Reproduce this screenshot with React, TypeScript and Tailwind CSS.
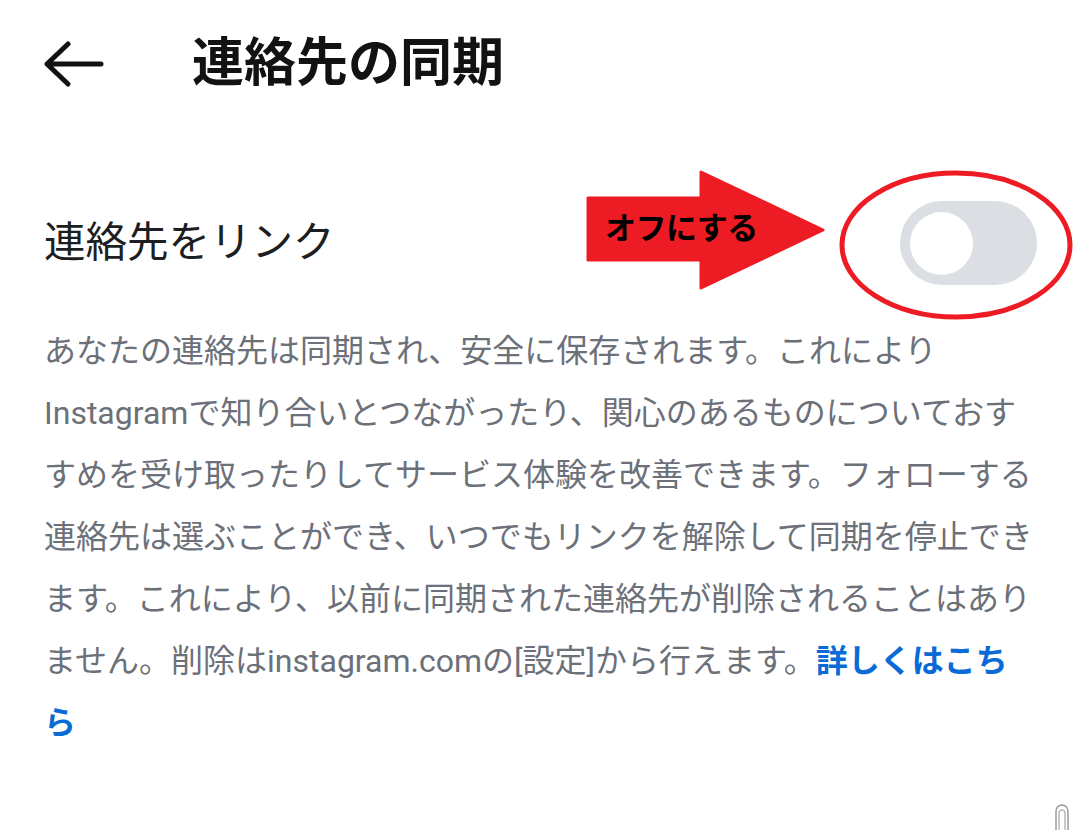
const lines = [
  "あなたの連絡先は同期され、安全に保存されます。これにより",
  "Instagramで知り合いとつながったり、関心のあるものについておす",
  "すめを受け取ったりしてサービス体験を改善できます。フォローする",
  "連絡先は選ぶことができ、いつでもリンクを解除して同期を停止でき",
  "ます。これにより、以前に同期された連絡先が削除されることはあり",
];

const BackArrow = () => (
  <svg width="60" height="46" viewBox="0 0 60 46" fill="none">
    <path
      d="M57 23H4M24 3L3 23L24 43"
      stroke="#111214"
      strokeWidth="5"
      strokeLinecap="round"
      strokeLinejoin="round"
    />
  </svg>
);

const Annotation = () => (
  <div className="absolute left-[586px] top-[170px] w-[490px] h-[152px] pointer-events-none">
    <svg width="490" height="152" viewBox="0 0 490 152" className="absolute inset-0">
      <path
        d="M2 28H115V2L237 60L115 118V90H2Z"
        fill="#ed1c24"
        strokeLinejoin="round"
        stroke="#ed1c24"
        strokeWidth="3"
      />
      <ellipse cx="370" cy="75" rx="114" ry="72" fill="none" stroke="#ed1c24" strokeWidth="5" />
    </svg>
    <span className="absolute left-[19px] top-[40px] text-[31px] leading-[38px] font-bold text-black tracking-[-0.5px]">
      オフにする
    </span>
  </div>
);

export default function App() {
  return (
    <div
      className="relative w-[1080px] h-[830px] bg-white overflow-hidden"
      style={{ fontFamily: "Roboto, 'Noto Sans CJK JP', sans-serif" }}
    >
      <header className="flex items-center h-[130px] pl-[44px] pb-[2px]">
        <BackArrow />
        <h1 className="ml-[88px] text-[52px] leading-[60px] font-bold text-[#111214]">
          連絡先の同期
        </h1>
      </header>

      <div className="flex items-center justify-between pl-[44px] pr-[43px] mt-[71px]">
        <span className="text-[41.5px] leading-[50px] text-[#1c1e21]">連絡先をリンク</span>
        <div className="w-[137px] h-[84px] rounded-full bg-[#dbdee3] flex items-center pl-[10px]">
          <div className="w-[63px] h-[63px] rounded-full bg-white" />
        </div>
      </div>

      <div className="pl-[44px] pr-[40px] mt-[35px] text-[32px] leading-[62px] text-[#6c7079]">
        {lines.map((l) => (
          <div key={l} className="whitespace-nowrap">
            {l}
          </div>
        ))}
        <div className="whitespace-nowrap">
          ません。削除はinstagram.comの[設定]から行えます。
          <span className="font-semibold text-[#0a6bd6]">詳しくはこち</span>
        </div>
        <div className="font-semibold text-[#0a6bd6]">ら</div>
      </div>

      <Annotation />

      <svg width="16" height="30" viewBox="0 0 16 30" className="absolute left-[1054px] top-[802px]">
        <path d="M2 30V9a6 6 0 0 1 12 0v21" fill="none" stroke="#9a9a9a" strokeWidth="1.5" />
        <path d="M5 30V11a3 3 0 0 1 6 0v19" fill="none" stroke="#b8b8b8" strokeWidth="1.5" />
      </svg>
    </div>
  );
}
